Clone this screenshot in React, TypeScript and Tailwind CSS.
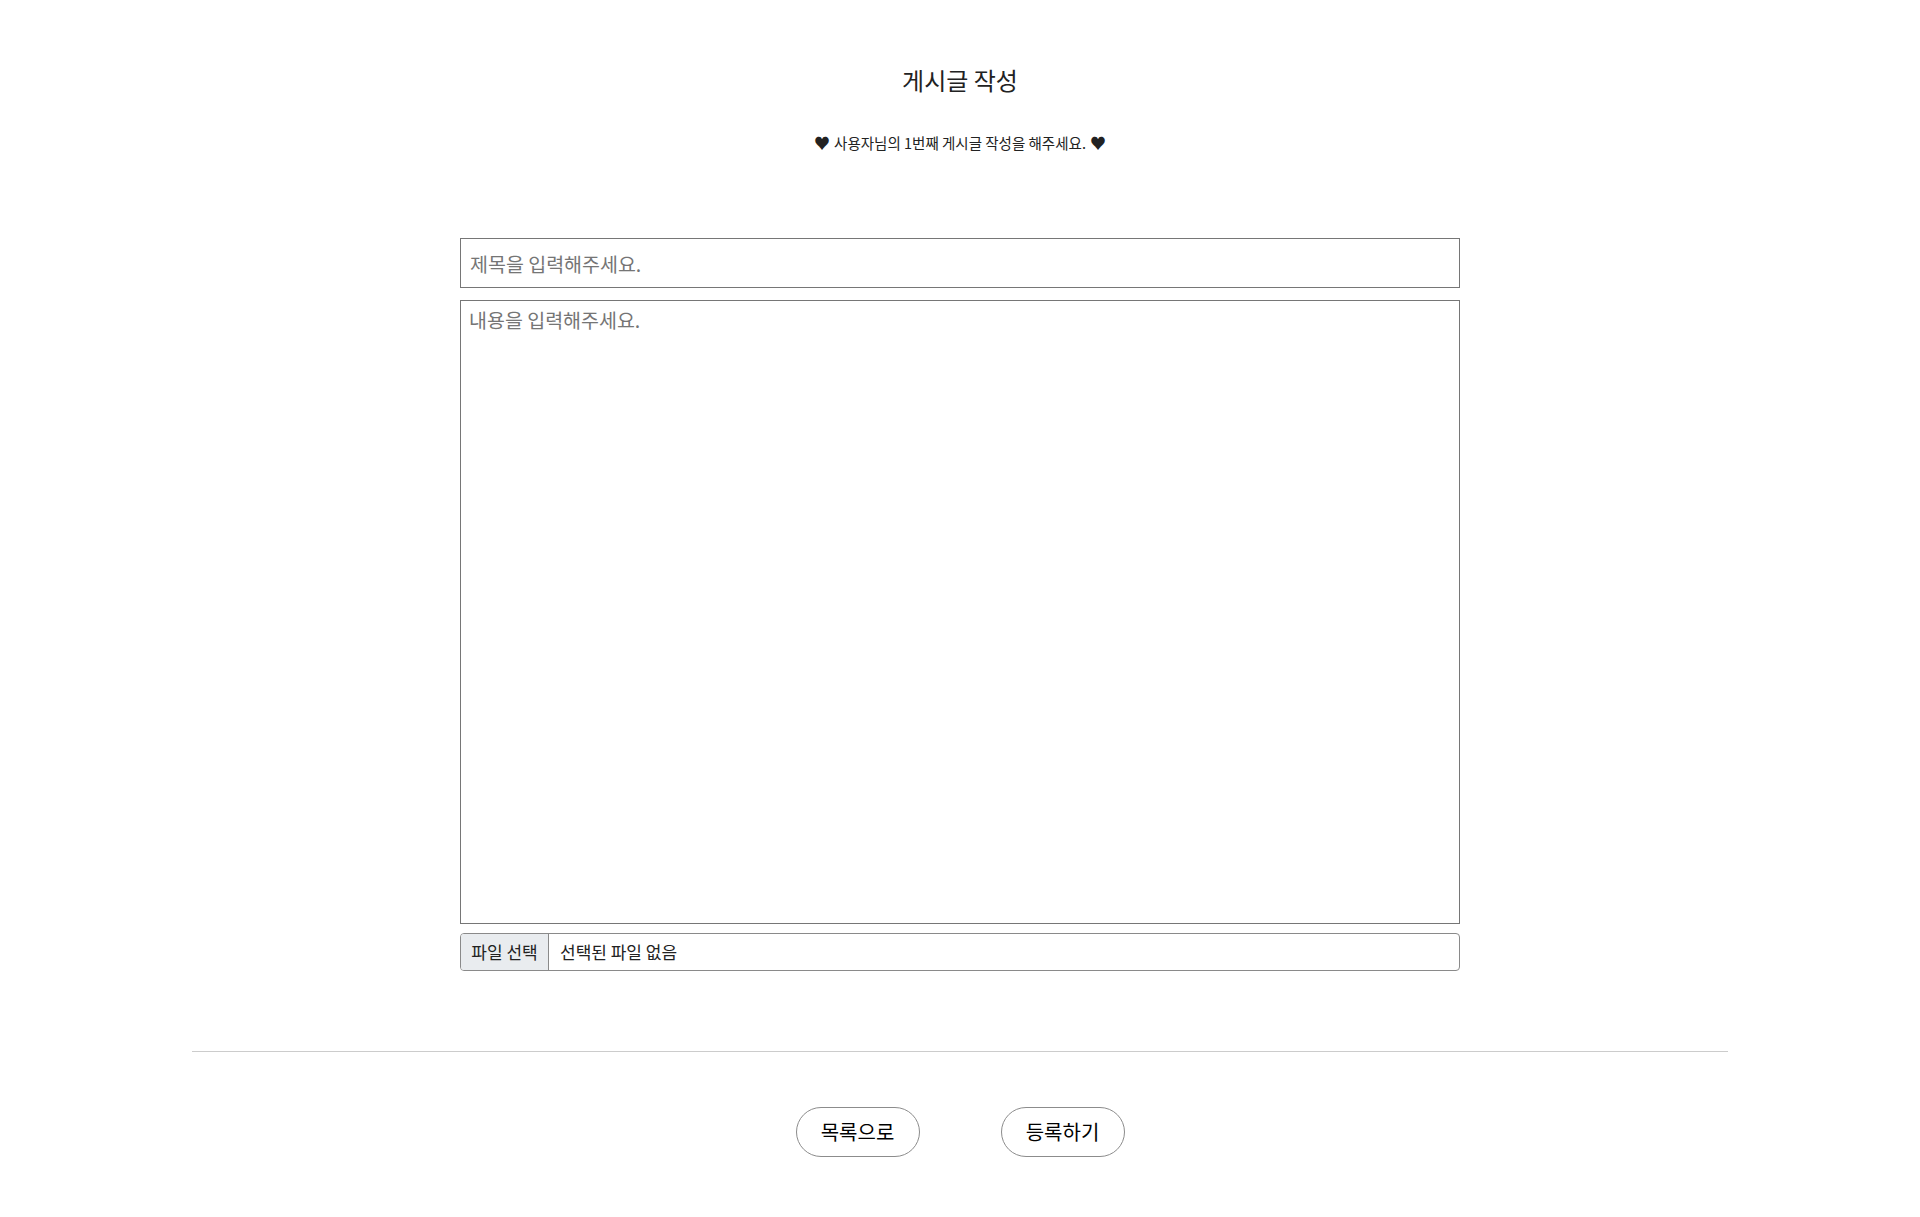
import { useState } from "react";

const KR = "font-['Noto_Sans_CJK_KR','Noto_Sans',sans-serif]";

export default function App() {
  const [title, setTitle] = useState("");
  const [content, setContent] = useState("");
  const [fileName, setFileName] = useState("");

  return (
    <div className={`min-h-[1217px] bg-white text-[#222] ${KR}`}>
      <div className="flex flex-col items-center pt-[63px]">
        <h1 className="text-[24px] leading-[34px] font-normal text-[#222]">게시글 작성</h1>
        <p className="mt-[35px] text-[14.5px] leading-[20px] text-[#222]">
          <span className="mr-[4px] text-[16px]">♥</span>
          사용자님의 1번째 게시글 작성을 해주세요.
          <span className="ml-[4px] text-[16px]">♥</span>
        </p>
      </div>

      <form className="mx-auto mt-[85px] flex w-[1000px] flex-col">
        <input
          value={title}
          onChange={(e) => setTitle(e.target.value)}
          placeholder="제목을 입력해주세요."
          className="h-[50px] w-full border border-[#767676] px-[9px] text-[19.5px] text-[#222] outline-none placeholder:text-[#757575]"
        />
        <textarea
          value={content}
          onChange={(e) => setContent(e.target.value)}
          placeholder="내용을 입력해주세요."
          className="mt-[12px] h-[624px] w-full resize-none border border-[#767676] px-[8px] py-[5px] text-[19.5px] leading-[28px] text-[#222] outline-none placeholder:text-[#757575]"
        />
        <label className="mt-[9px] flex h-[38px] w-full cursor-pointer items-stretch overflow-hidden rounded-[4px] border border-[#8a8a8a] text-[17px]">
          <span className="flex w-[88px] items-center justify-center border-r border-[#8a8a8a] bg-[#e9ecef] text-[#222]">
            파일 선택
          </span>
          <span className="flex items-center pl-[11px] text-[#222]">
            {fileName || "선택된 파일 없음"}
          </span>
          <input
            type="file"
            className="hidden"
            onChange={(e) => setFileName(e.target.files?.[0]?.name ?? "")}
          />
        </label>
      </form>

      <hr className="mx-auto mt-[80px] w-[1536px] border-t border-[#cccccc]" />

      <div className="mt-[55px] flex justify-center gap-[81px]">
        <button className="h-[50px] w-[124px] rounded-full border border-[#8c8c8c] bg-white text-[20px] text-black">
          목록으로
        </button>
        <button className="h-[50px] w-[124px] rounded-full border border-[#8c8c8c] bg-white text-[20px] text-black">
          등록하기
        </button>
      </div>
    </div>
  );
}
